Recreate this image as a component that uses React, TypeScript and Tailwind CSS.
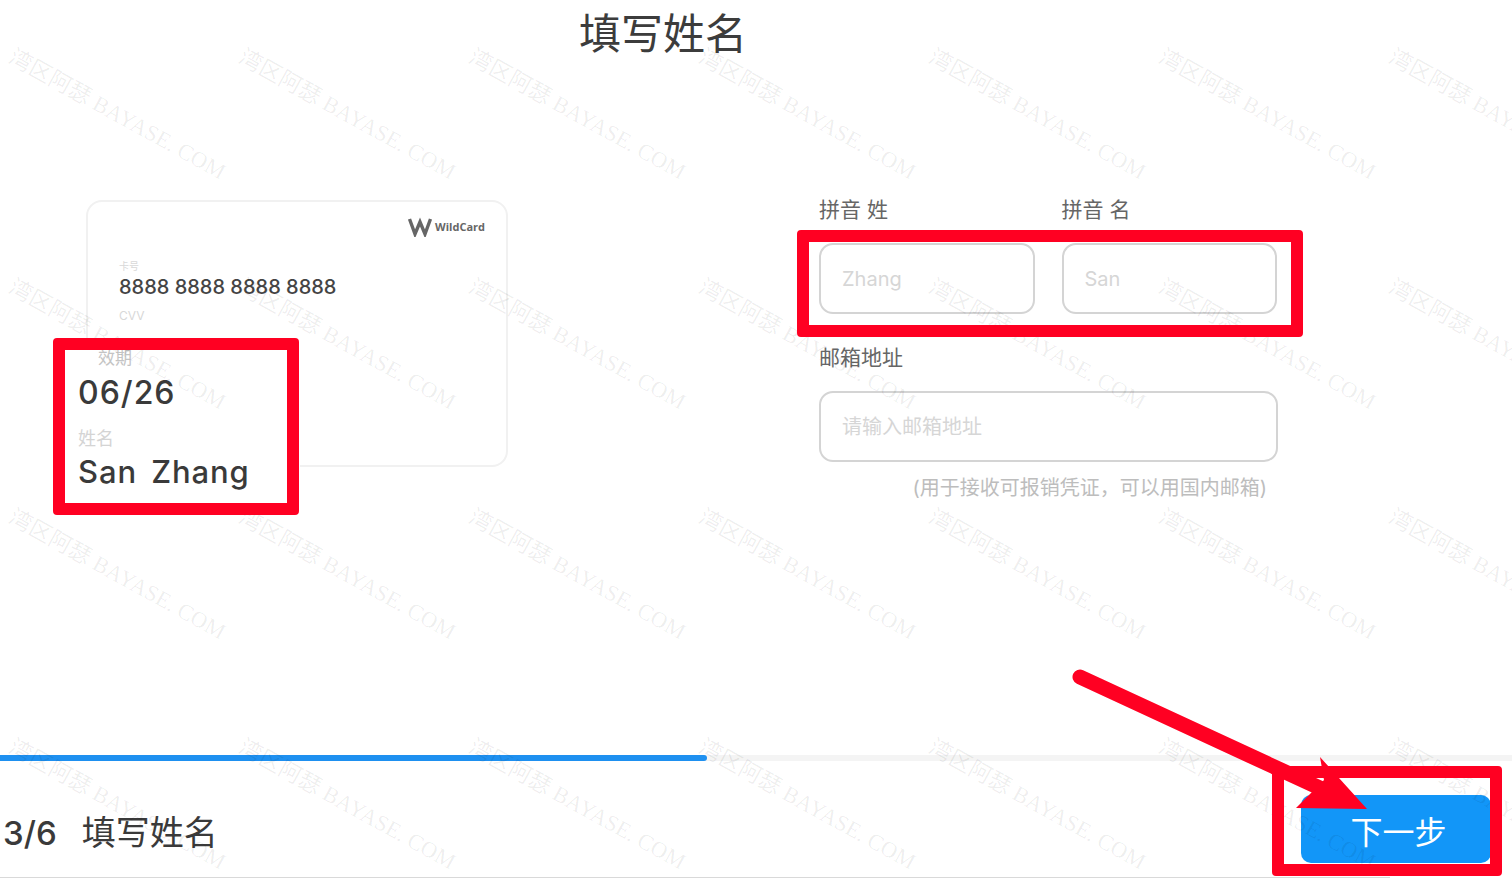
const sans = 'font-["Inter","Noto_Sans_CJK_SC",sans-serif]';

const rows = [0, 1, 2, 3];
const cols = [0, 1, 2, 3, 4, 5, 6];

const Watermarks = () => (
  <div className="absolute inset-0 pointer-events-none overflow-hidden grid grid-cols-[repeat(7,230px)] auto-rows-[230px] pl-[16px] pt-[46px]">
    {rows.flatMap((r) =>
      cols.map((c) => (
        <div key={`${r}-${c}`} className="origin-top-left rotate-[29deg] whitespace-nowrap text-[22.5px] leading-none text-black/[0.07] font-['Liberation_Serif','Noto_Sans_CJK_SC',serif]">
          湾区阿瑟 BAYASE. COM
        </div>
      ))
    )}
  </div>
);

const Field = ({ label, placeholder, className }: { label: string; placeholder: string; className: string }) => (
  <div className={className}>
    <p className="text-[21px] leading-[28px] text-[#666]">{label}</p>
    <input
      readOnly
      placeholder={placeholder}
      className="mt-[19px] w-full h-[71px] px-[21px] border-2 border-[#d4d4d4] rounded-[14px] text-[20px] bg-transparent outline-none placeholder:text-[#d6d6d6]"
    />
  </div>
);

const Card = () => (
  <div className="relative w-[422px] h-[267px] border-2 border-[#f1f1f1] rounded-[16px] px-[31px] pt-[15px]">
    <div className="flex justify-end items-center gap-[3px] -mr-[10px]">
      <svg width="24" height="20" viewBox="0 0 24 20" fill="none" stroke="#666" strokeWidth="3.4">
        <path d="M1.5 2 L7 17 L12 5 L17 17 L22.5 2" />
      </svg>
      <span className="text-[11px] font-bold text-[#666] font-['Open_Sans',sans-serif]">WildCard</span>
    </div>
    <p className="mt-[22px] text-[10px] leading-[14px] text-[#d8d8d8]">卡号</p>
    <p className="text-[20px] leading-[28px] font-medium text-[#444]">8888 8888 8888 8888</p>
    <p className="mt-[7px] text-[12px] leading-[16px] text-[#d8d8d8]">CVV</p>

    {/* 标注框里的白底和内容 */}
    <div className="absolute left-[-34px] top-[136px] w-[246px] h-[176px] bg-white pl-[24px] pt-[11px]">
      <p className="text-[17px] leading-[18px] text-[#c4c4c4] pl-[20px]">效期</p>
      <p className="mt-[4px] text-[32px] leading-[44px] font-medium tracking-[1px] text-[#3a3a3a]">06/26</p>
      <p className="mt-[12px] text-[18px] leading-[24px] text-[#d4d4d4]">姓名</p>
      <p className="-mt-[1px] text-[31px] leading-[44px] font-medium tracking-[0.9px] [word-spacing:5px] text-[#3a3a3a] whitespace-pre">San Zhang</p>
    </div>
  </div>
);

export default function App() {
  return (
    <div className={`relative w-[1512px] h-[878px] overflow-hidden bg-white flex flex-col ${sans}`}>
      <h1 className="ml-[579px] mt-[8px] h-[52px] text-[42px] leading-[52px] font-normal text-[#3c3c3c]">填写姓名</h1>

      <div className="flex mt-[140px] pl-[86px]">
        <Card />
        <div className="ml-[311px] w-[458px] mt-[-4px]">
          <div className="flex gap-[26px]">
            <Field label="拼音 姓" placeholder="Zhang" className="w-[216px]" />
            <Field label="拼音 名" placeholder="San" className="w-[216px] ml-px" />
          </div>
          <Field label="邮箱地址" placeholder="请输入邮箱地址" className="mt-[30px] w-[459px]" />
          <p className="mt-[13px] pr-[10px] text-right text-[20px] leading-[26px] text-[#bdbdbd] whitespace-nowrap">(用于接收可报销凭证，可以用国内邮箱)</p>
        </div>
      </div>

      <div className="mt-auto h-[6px] bg-[#f4f4f4]">
        <div className="w-[707px] h-full bg-[#1e90f0] rounded-r-full" />
      </div>

      <div className="h-[117px] flex items-start border-b border-[#d9d9d9] w-[1390px]">
        <p className="mt-[50px] ml-[3px] text-[33px] leading-[44px] font-medium text-[#3a3a3a] whitespace-pre">3/6</p>
        <p className="mt-[50px] ml-[25px] text-[34px] leading-[44px] text-[#3a3a3a]">填写姓名</p>
      </div>
      <button className="absolute left-[1301px] top-[795px] w-[190px] h-[68px] bg-[#1296f8] rounded-[10px] text-white text-[32px] leading-[76px] pl-[5px]">下一步</button>

      <Watermarks />

      {/* 红色标注 */}
      <div className="absolute left-[53px] top-[338px] w-[246px] h-[177px] border-[12px] border-[#ff0022] rounded-[4px]" />
      <div className="absolute left-[797px] top-[230px] w-[506px] h-[107px] border-[12px] border-[#ff0022] rounded-[4px]" />
      <div className="absolute left-[1272px] top-[766px] w-[230px] h-[110px] border-[12px] border-[#ff0022] rounded-[4px]" />
      <svg className="absolute left-[1060px] top-[660px] w-[320px] h-[160px]" viewBox="0 0 320 160" fill="none">
        <path d="M20 17 L275 135" stroke="#ff0022" strokeWidth="15" strokeLinecap="round" />
        <path d="M307 149 L260 97 L264 120 L236 148 Z" fill="#ff0022" />
      </svg>
    </div>
  );
}
